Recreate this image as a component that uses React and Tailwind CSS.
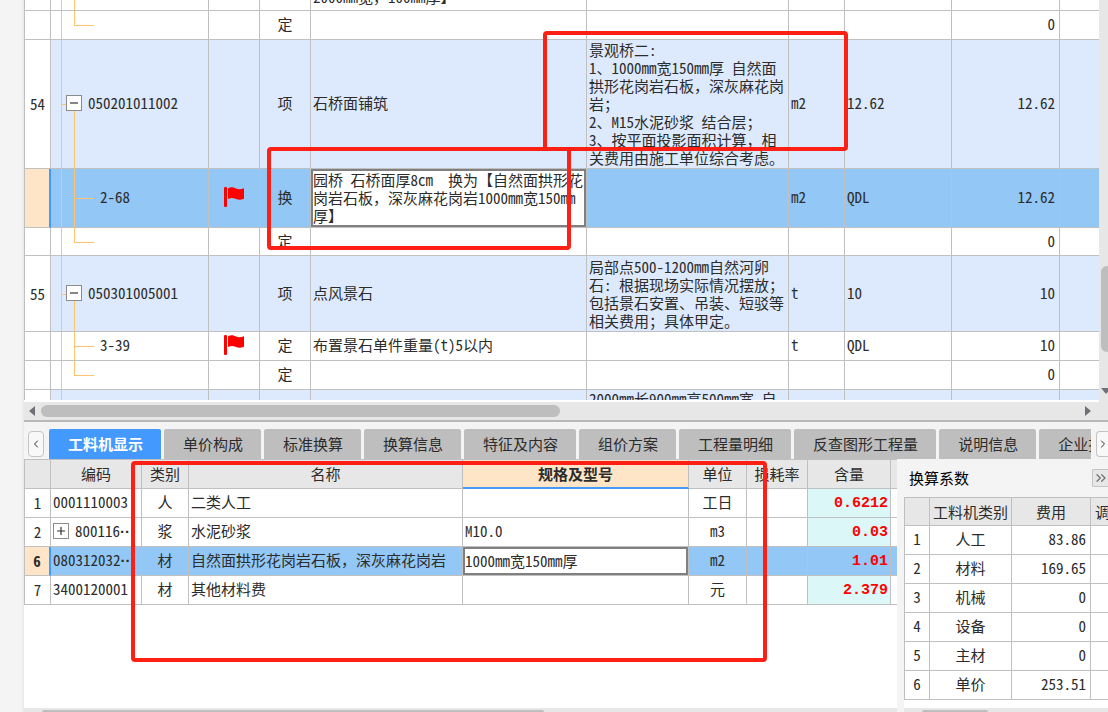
import React, { useState } from 'react';
import { ChevronLeft, ChevronRight, ChevronsRight } from 'lucide-react';

const tabs = [
  '工料机显示',
  '单价构成',
  '标准换算',
  '换算信息',
  '特征及内容',
  '组价方案',
  '工程量明细',
  '反查图形工程量',
  '说明信息',
  '企业指标',
];

const bridgeFeature = `景观桥二:
1、1000mm宽150mm厚 自然面
拱形花岗岩石板，深灰麻花岗
岩；
2、M15水泥砂浆 结合层；
3、按平面投影面积计算，相
关费用由施工单位综合考虑。`;

const stoneFeature = `局部点500-1200mm自然河卵
石: 根据现场实际情况摆放；
包括景石安置、吊装、短驳等
相关费用；具体甲定。`;

const swapName = `园桥 石桥面厚8cm  换为【自然面拱形花
岗岩石板，深灰麻花岗岩1000mm宽150mm
厚】`;

const billRows = [
  { kind: 'end', height: 'h-[29px]', type: '定', qty: '0' },
  {
    kind: 'item', height: 'h-[129px]', no: '54', code: '050201011002', type: '项', name: '石桥面铺筑',
    feature: bridgeFeature, unit: 'm2', expr: '12.62', qty: '12.62',
  },
  {
    kind: 'child', height: 'h-[59px]', selected: true, code: '2-68', flag: true, type: '换', name: swapName,
    unit: 'm2', expr: 'QDL', qty: '12.62',
  },
  { kind: 'end', height: 'h-[28px]', type: '定', qty: '0' },
  {
    kind: 'item', height: 'h-[76px]', no: '55', code: '050301005001', type: '项', name: '点风景石',
    feature: stoneFeature, unit: 't', expr: '10', qty: '10',
  },
  {
    kind: 'child', height: 'h-[29px]', code: '3-39', flag: true, type: '定', name: '布置景石单件重量(t)5以内',
    unit: 't', expr: 'QDL', qty: '10',
  },
  { kind: 'end', height: 'h-[29px]', type: '定', qty: '0' },
];

const resources = [
  { no: 1, code: '0001110003', type: '人', name: '二类人工', spec: '', unit: '工日', amount: '0.6212' },
  {
    no: 2, code: '800116', cut: true, expandable: true, type: '浆', name: '水泥砂浆',
    spec: 'M10.0', unit: 'm3', amount: '0.03',
  },
  {
    no: 6, code: '080312032', cut: true, selected: true, type: '材', name: '自然面拱形花岗岩石板，深灰麻花岗岩',
    spec: '1000mm宽150mm厚', unit: 'm2', amount: '1.01',
  },
  { no: 7, code: '3400120001', type: '材', name: '其他材料费', spec: '', unit: '元', amount: '2.379' },
];

const factors = [
  ['人工', '83.86'],
  ['材料', '169.65'],
  ['机械', '0'],
  ['设备', '0'],
  ['主材', '0'],
  ['单价', '253.51'],
];

const cell = 'border-r border-b border-[#c0c0c0] p-0';
const textCell = 'border-r border-b border-[#c0c0c0] px-0 pt-0 pb-[2px]';

const Flag = () => (
  <svg width="20" height="20" viewBox="0 0 20 20" fill="#ff0000" className="mx-auto block">
    <rect x="0" y="0" width="3" height="20" rx="1" />
    <path d="M4 1.500C7-.3 9 .2 12 1.600c2.500 1 5 .7 8-.4v10.500c-3 1.300-5.500 1.300-8 .3-3-1.200-5-1.400-8 0z" />
  </svg>
);

const Arrow = ({ points, className }) => (
  <svg width="10" height="10" viewBox="0 0 10 10" fill="#707078" className={className}>
    <polygon points={points} />
  </svg>
);

const TreeBox = ({ open, label }) => (
  <button
    type="button"
    aria-label={label}
    className="relative flex size-4 shrink-0 items-center justify-center border border-[#8c8c8c] bg-white"
  >
    <svg width="10" height="10" viewBox="0 0 10 10" stroke="#333" strokeWidth="1.2">
      <path d={open ? 'M1 5h8' : 'M1 5h8M5 1v8'} />
    </svg>
  </button>
);

// connector lines of the tree column
const Branch = ({ kind }) => (
  <span aria-hidden="true">
    <span className="absolute inset-y-0 left-[10px] w-px bg-[#ffc46b]" />
    {kind === 'item' && (
      <>
        <span className="absolute top-1/2 left-[10px] h-px w-[5px] bg-[#ffc46b]" />
        <span className="absolute top-1/2 bottom-0 left-[23px] w-px bg-[#ffc46b]" />
      </>
    )}
    {kind === 'child' && <span className="absolute inset-y-0 left-[23px] w-px bg-[#ffc46b]" />}
    {kind === 'end' && <span className="absolute top-0 bottom-1/2 left-[23px] w-px bg-[#ffc46b]" />}
    {(kind === 'child' || kind === 'end') && (
      <span className="absolute top-1/2 left-[23px] h-px w-5 bg-[#ffc46b]" />
    )}
  </span>
);

const BillRow = ({ row }) => {
  let tone = 'bg-white';
  if (row.kind === 'item') tone = 'bg-[#dde9fd]';
  if (row.selected) tone = 'bg-[#92c7f6]';

  return (
    <tr className={`${row.height} ${tone}`}>
      <td
        className={`border-b border-l border-[#c0c0c0] p-0 text-center ${
          row.selected ? 'border-r-2 border-r-[#4499ff] bg-[#ffe5c7]' : 'border-r bg-white'
        }`}
      >
        {row.no}
      </td>
      <td className={`relative ${textCell}`}>
        <Branch kind={row.kind} />
        {row.kind === 'item' && (
          <div className="flex items-center gap-[6px] pl-[15px]">
            <TreeBox open label={`折叠 ${row.code}`} />
            {row.code}
          </div>
        )}
        {row.kind === 'child' && <div className="pl-[49px]">{row.code}</div>}
      </td>
      <td className={textCell}>{row.flag && <Flag />}</td>
      <td className={`${textCell} text-center`}>{row.type}</td>
      <td className={row.selected ? cell : textCell}>
        {row.selected ? (
          <textarea
            aria-label="名称"
            rows={3}
            defaultValue={row.name}
            className="block h-[58px] w-full resize-none overflow-hidden border-2 border-[#808080] bg-white whitespace-pre outline-none"
          />
        ) : (
          <div className="pl-[2px]">{row.name}</div>
        )}
      </td>
      <td className={`${cell} pl-[2px] whitespace-pre`}>{row.feature}</td>
      <td className={textCell}>
        <div className="pl-[2px]">{row.unit}</div>
      </td>
      <td className={textCell}>
        <div className="pl-[2px]">{row.expr}</div>
      </td>
      <td className={`${textCell} text-right`}>
        <div className="pr-1">{row.qty}</div>
      </td>
      <td className="border-b border-[#c0c0c0] p-0" />
    </tr>
  );
};

const BillTable = () => (
  <table className="w-full table-fixed border-separate border-spacing-0">
    <colgroup>
      <col className="w-[27px]" />
      <col className="w-[158px]" />
      <col className="w-[51px]" />
      <col className="w-[51px]" />
      <col className="w-[276px]" />
      <col className="w-[202px]" />
      <col className="w-[56px]" />
      <col className="w-[107px]" />
      <col className="w-[108px]" />
      <col />
    </colgroup>
    <tbody>
      <tr className="h-[11px] bg-white">
        <td className={`${cell} border-l`} />
        <td className={`relative ${cell}`}>
          <Branch kind="trunk" />
          <span className="absolute inset-y-0 left-[23px] w-px bg-[#ffc46b]" />
        </td>
        <td className={cell} />
        <td className={cell} />
        <td className={cell}>
          <div className="flex h-[10px] items-end overflow-hidden pb-1 pl-[2px]">2000mm宽，100mm厚】</div>
        </td>
        <td className={cell} />
        <td className={cell} />
        <td className={cell} />
        <td className={cell} />
        <td className="border-b border-[#c0c0c0] p-0" />
      </tr>
      {billRows.map((row, index) => (
        <BillRow key={index} row={row} />
      ))}
      <tr className="h-[10px] bg-[#dde9fd]">
        <td className="border-x border-[#c0c0c0] bg-white p-0" />
        <td className="relative border-r border-[#c0c0c0] p-0">
          <Branch kind="trunk" />
        </td>
        <td className="border-r border-[#c0c0c0] p-0" />
        <td className="border-r border-[#c0c0c0] p-0" />
        <td className="border-r border-[#c0c0c0] p-0" />
        <td className="border-r border-[#c0c0c0] p-0">
          <div className="h-[10px] overflow-hidden pl-[2px] whitespace-nowrap">2000mm长900mm高500mm宽 自</div>
        </td>
        <td className="border-r border-[#c0c0c0] p-0" />
        <td className="border-r border-[#c0c0c0] p-0" />
        <td className="border-r border-[#c0c0c0] p-0" />
        <td className="p-0" />
      </tr>
    </tbody>
  </table>
);

const TabBar = () => {
  const [active, setActive] = useState(0);

  return (
    <div className="flex items-center pt-[7px] pl-1">
      <button
        type="button"
        aria-label="向左滚动"
        className="flex h-[26px] w-4 shrink-0 items-center justify-center rounded-sm border border-[#c4c4c4] bg-[#f8f8f8]"
      >
        <ChevronLeft size={12} />
      </button>
      <div role="tablist" className="ml-[5px] flex min-w-0 flex-1 gap-[3px] overflow-hidden">
        {tabs.map((tab, index) => (
          <button
            key={tab}
            type="button"
            role="tab"
            aria-selected={index === active}
            onClick={() => setActive(index)}
            className={`h-[30px] shrink-0 rounded-t-xs pr-[18px] pl-[19px] whitespace-nowrap ${
              index === active ? 'bg-[#4499ff] font-bold text-white' : 'bg-[#bebebe]'
            }`}
          >
            {tab}
          </button>
        ))}
      </div>
      <button
        type="button"
        aria-label="向右滚动"
        className="ml-[5px] flex h-[26px] w-3 shrink-0 items-center justify-center rounded-l-sm border border-r-0 border-[#c4c4c4] bg-[#f8f8f8]"
      >
        <ChevronRight size={12} className="shrink-0" />
      </button>
    </div>
  );
};

const ResourceTable = () => {
  const head = `${cell} border-t font-normal`;

  return (
    <table className="w-full table-fixed border-separate border-spacing-0">
      <colgroup>
        <col className="w-[27px]" />
        <col className="w-[91px]" />
        <col className="w-[47px]" />
        <col className="w-[274px]" />
        <col className="w-[226px]" />
        <col className="w-[58px]" />
        <col className="w-[61px]" />
        <col className="w-[83px]" />
        <col />
      </colgroup>
      <thead>
        <tr className="h-[30px] bg-[#e7e7e7]">
          <th className={`${head} border-l`} />
          <th className={head}>编码</th>
          <th className={head}>类别</th>
          <th className={head}>名称</th>
          <th className="border-t border-r border-b-2 border-[#c0c0c0] border-b-[#4499ff] bg-[#ffe5c7] p-0 font-bold">
            规格及型号
          </th>
          <th className={head}>单位</th>
          <th className={head}>损耗率</th>
          <th className={head}>含量</th>
          <th className="border-t border-b border-[#c0c0c0] p-0" />
        </tr>
      </thead>
      <tbody>
        {resources.map((item) => (
          <tr key={item.no} className={`h-[29px] ${item.selected ? 'bg-[#92c7f6]' : 'bg-white'}`}>
            <td
              className={`border-b border-l border-[#c0c0c0] p-0 text-center ${
                item.selected ? 'border-r-2 border-r-[#4499ff] bg-[#ffe5c7] font-bold' : 'border-r'
              }`}
            >
              {item.no}
            </td>
            <td className={textCell}>
              <div className="flex items-center gap-[6px] pl-[2px] whitespace-nowrap">
                {item.expandable && <TreeBox label={`展开 ${item.name}`} />}
                <span>
                  {item.code}
                  {item.cut && <span className="font-['Liberation_Sans',sans-serif] font-bold">··</span>}
                </span>
              </div>
            </td>
            <td className={`${textCell} text-center`}>{item.type}</td>
            <td className={textCell}>
              <div className="pl-[2px] whitespace-nowrap">{item.name}</div>
            </td>
            <td className={item.selected ? cell : textCell}>
              {item.selected ? (
                <input
                  aria-label="规格及型号"
                  defaultValue={item.spec}
                  className="block h-[28px] w-full border-2 border-[#808080] bg-white pb-[2px] outline-none"
                />
              ) : (
                <div className="pl-[2px]">{item.spec}</div>
              )}
            </td>
            <td className={`${textCell} text-center`}>{item.unit}</td>
            <td className={cell} />
            <td
              className={`${cell} text-right font-['Liberation_Mono',monospace] font-bold text-[#ff0000] ${
                item.selected ? '' : 'bg-[#dbf7f7]'
              }`}
            >
              <div className="pt-[2px] pr-[2px]">{item.amount}</div>
            </td>
            <td className="border-b border-[#c0c0c0] p-0" />
          </tr>
        ))}
      </tbody>
    </table>
  );
};

const FactorPanel = () => {
  const head = `${cell} border-t font-normal whitespace-nowrap`;

  return (
    <aside className="flex w-[204px] shrink-0 flex-col overflow-hidden bg-white">
      <div className="flex h-[38px] items-center justify-between bg-[#f4f4f4] pl-[5px]">
        <h2 className="text-black">换算系数</h2>
        <button
          type="button"
          aria-label="展开面板"
          className="mb-px flex h-[18px] w-4 items-center justify-center rounded-l-xs border border-r-0 border-[#c4c4c4] bg-[#e7e7e7]"
        >
          <ChevronsRight size={16} className="shrink-0" color="#777" />
        </button>
      </div>
      <table className="w-full table-fixed border-separate border-spacing-0">
        <colgroup>
          <col className="w-[26px]" />
          <col className="w-[82px]" />
          <col className="w-[79px]" />
          <col />
        </colgroup>
        <thead>
          <tr className="h-[29px] bg-[#e7e7e7]">
            <th className={`${head} border-l`} />
            <th className={head}>工料机类别</th>
            <th className={head}>费用</th>
            <th className="overflow-hidden border-t border-b border-[#c0c0c0] p-0 pl-1 text-left font-normal whitespace-nowrap">
              调
            </th>
          </tr>
        </thead>
        <tbody>
          {factors.map(([name, cost], index) => (
            <tr key={name} className="h-[29px] bg-white">
              <td className={`${textCell} border-l text-center`}>{index + 1}</td>
              <td className={`${textCell} text-center`}>{name}</td>
              <td className={`${textCell} text-right`}>
                <div className="pr-1">{cost}</div>
              </td>
              <td className="border-b border-[#c0c0c0] p-0" />
            </tr>
          ))}
        </tbody>
      </table>
      <div className="mt-auto h-1 bg-[#e7e7e7] px-[18px] pt-[2px]">
        <div className="h-[2px] w-[66px] rounded-t-xs bg-[#bebebe]" />
      </div>
    </aside>
  );
};

// red review frames laid over the workspace
const Marks = () => (
  <div aria-hidden="true" className="pointer-events-none">
    <div className="absolute top-[31px] left-[543px] h-[120px] w-[305px] rounded-sm border-4 border-[#ff2015]" />
    <div className="absolute top-[147px] left-[267px] h-[103px] w-[304px] rounded-sm border-4 border-[#ff2015]" />
    <div className="absolute top-[461px] left-[131px] h-[201px] w-[636px] rounded-sm border-4 border-[#ff2015]" />
  </div>
);

const App = () => {
  return (
    <div className="relative flex h-screen overflow-hidden bg-[#f4f4f4] font-['Noto_Sans_Mono_CJK_SC','Noto_Sans_CJK_SC',sans-serif] text-[15px] leading-[18px] text-[#2c2c2c]">
      <div className="w-6 shrink-0 border-r-2 border-[#ebebeb]" />
      <main className="flex min-w-0 flex-1 flex-col">
        <section className="flex shrink-0 border-b-2 border-[#b8b8b8] bg-[#e7e7e7]">
          <div className="min-w-0 flex-1">
            <BillTable />
            <div className="flex h-5 items-center border-t-2 border-white pr-[6px] pl-[3px]">
              <Arrow points="8,0 8,10 2,5" className="shrink-0" />
              <div className="mx-1 flex-1">
                <div className="h-3 w-1/2 rounded-full bg-[#bebebe]" />
              </div>
              <Arrow points="2,0 2,10 8,5" className="shrink-0" />
            </div>
          </div>
          <div className="flex w-[9px] shrink-0 flex-col overflow-hidden pt-[266px] pl-[2px]">
            <div className="h-[86px] w-3 rounded-full bg-[#bebebe]" />
            <Arrow points="0,2 10,2 5,8" className="mt-auto mb-[24px] shrink-0" />
          </div>
        </section>

        <TabBar />

        <div className="flex min-h-0 flex-1 gap-[7px]">
          <section className="flex min-w-0 flex-1 flex-col bg-white">
            <ResourceTable />
            <div className="mt-auto h-1 bg-[#e7e7e7] px-[18px] pt-[2px]">
              <div className="h-[2px] w-3/5 rounded-t-xs bg-[#bebebe]" />
            </div>
          </section>
          <FactorPanel />
        </div>
      </main>
      <Marks />
    </div>
  );
};

export default App;
